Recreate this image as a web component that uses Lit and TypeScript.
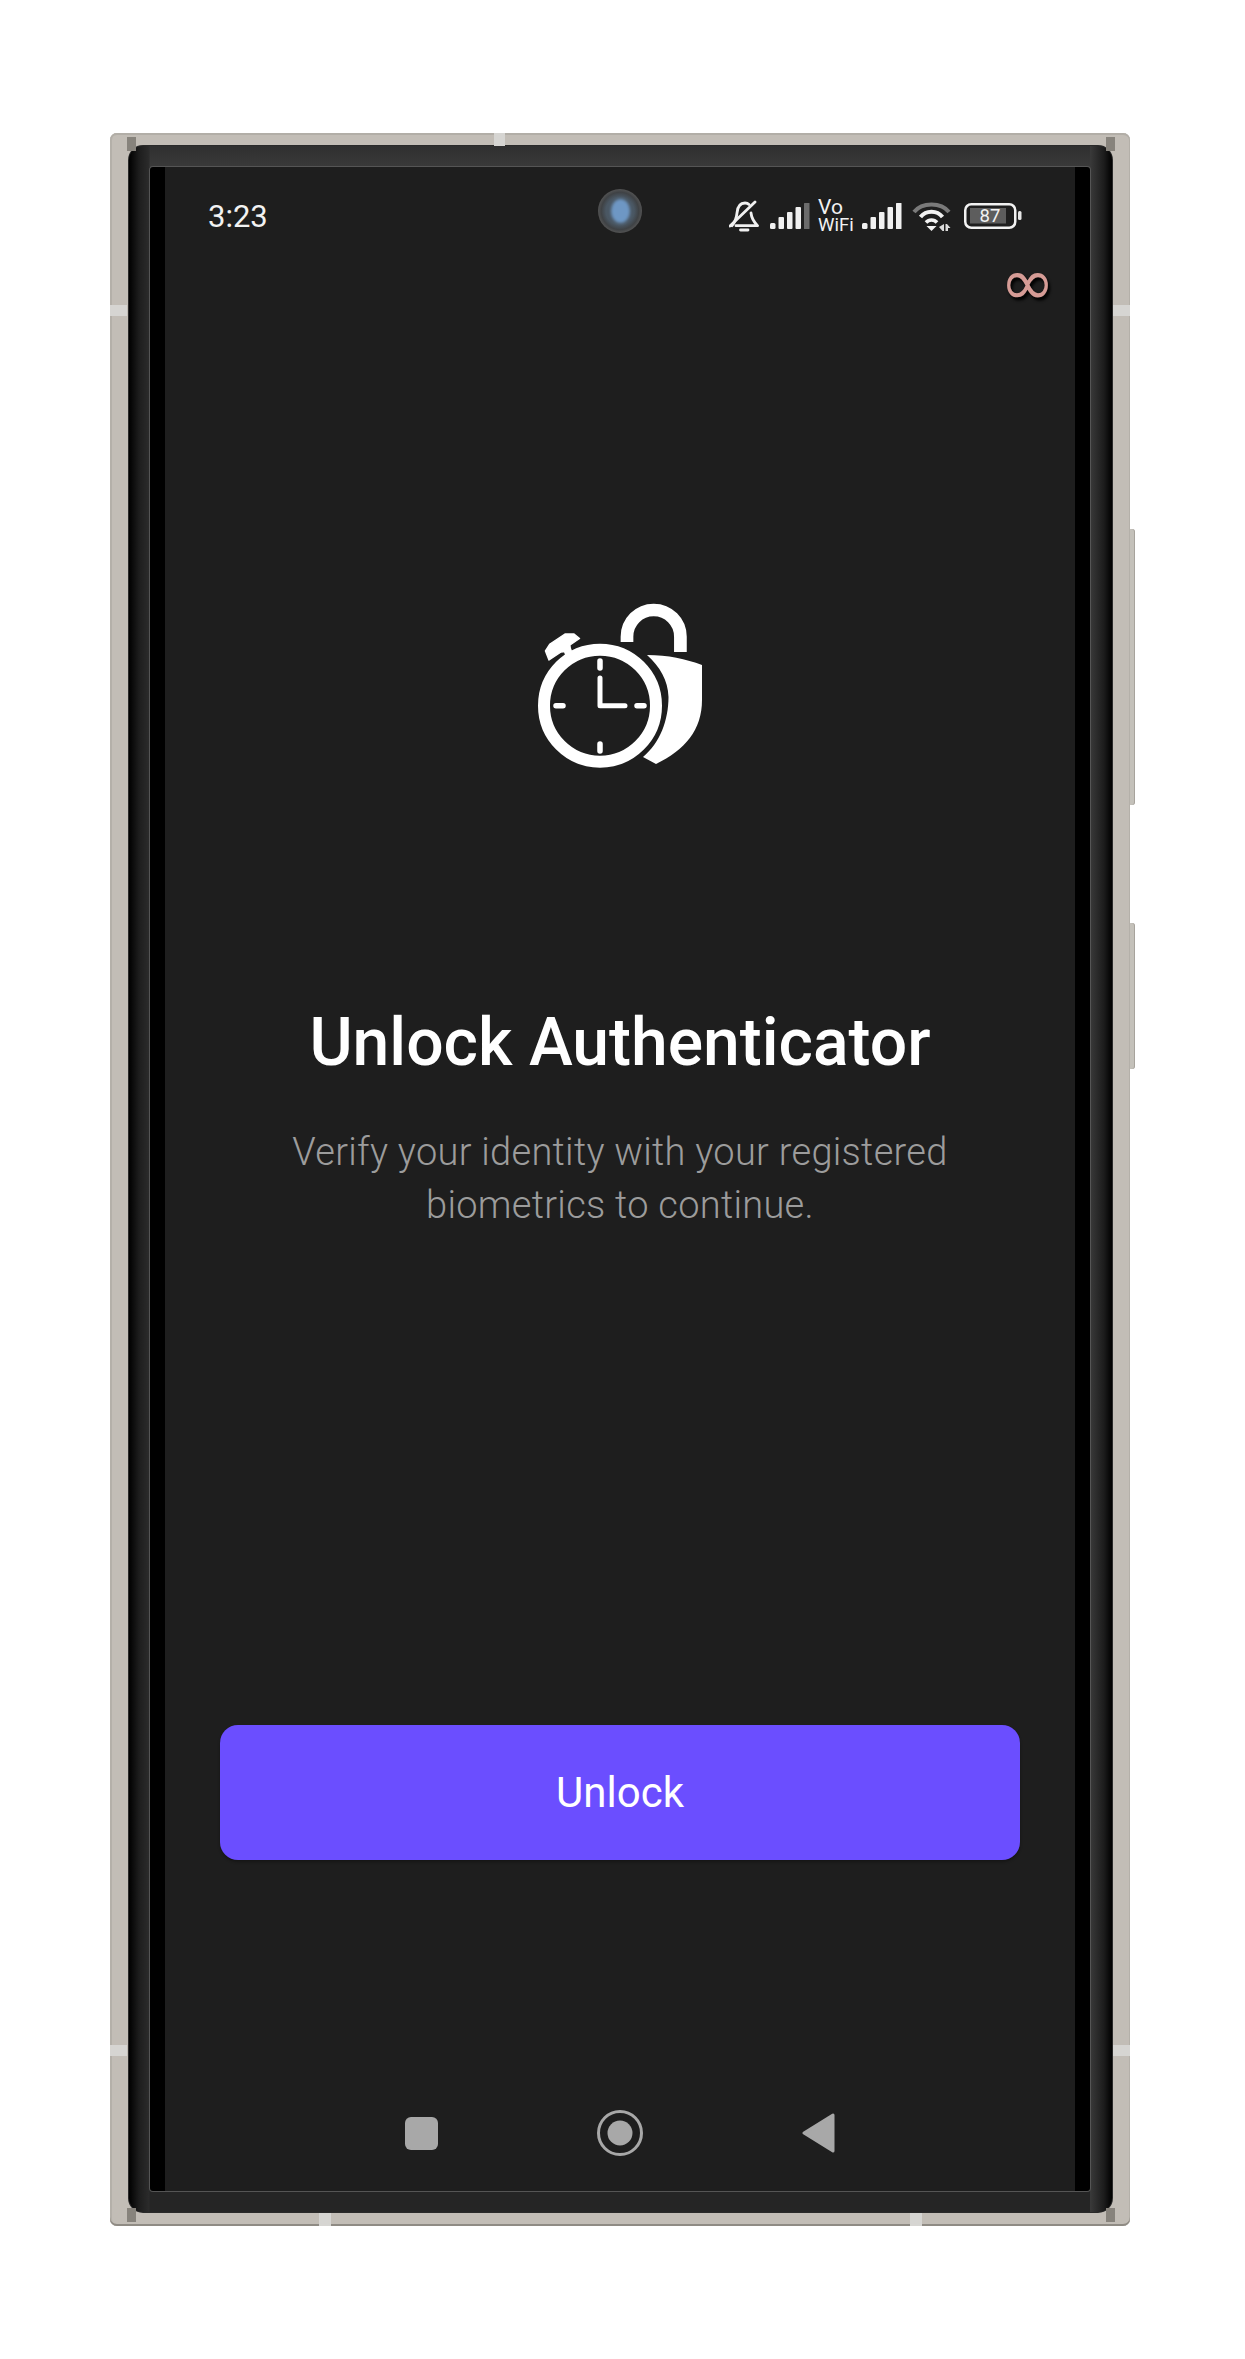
import { LitElement, html, css, svg } from "lit";
import { customElement } from "lit/decorators.js";

const signal = (last: string) => svg`
  <rect x="0" y="20" width="5.500" height="6" rx="1.500" fill="#f0f0f0"/>
  <rect x="8.500" y="14" width="5.500" height="12" rx="1" fill="#f0f0f0"/>
  <rect x="17" y="9" width="5.500" height="17" rx="1" fill="#f0f0f0"/>
  <rect x="25.500" y="4" width="5.500" height="22" rx="1" fill="#f0f0f0"/>
  <rect x="34" y="0" width="5.500" height="26" rx="0.500" fill="${last}"/>`;

@customElement("app-root")
export class AppRoot extends LitElement {
  static styles = css`
    :host { display: block; width: 1245px; height: 2359px; background: #fff; font-family: Roboto, "Liberation Sans", sans-serif; overflow: hidden; }
    .page { padding: 133px 115px 133px 110px; height: 2359px; box-sizing: border-box; }
    .frame { position: relative; width: 1020px; height: 2093px; box-sizing: border-box; padding: 13px 18px 14px 19px; background: #c2bdb6; border-radius: 7px; box-shadow: inset 0 -2px 0 #8f8b84, inset 0 2px 0 #b2aea7, inset 2px 0 0 #b4b0a9, inset -1px 0 0 #b4b0a9; }
    .corner { position: absolute; width: 9px; height: 14px; background: #87837c; }
    .c1 { left: 17px; top: 4px; } .c2 { right: 15px; top: 4px; } .c3 { left: 17px; bottom: 4px; } .c4 { right: 15px; bottom: 4px; }
    .band { position: absolute; background: #d6d5d2; }
    .bl1 { left: 0; top: 172px; width: 17px; height: 11px; }
    .br1 { right: 0; top: 172px; width: 17px; height: 11px; }
    .bl2 { left: 0; top: 1912px; width: 17px; height: 11px; }
    .br2 { right: 0; top: 1912px; width: 17px; height: 11px; }
    .bt1 { left: 384px; top: 0; width: 11px; height: 13px; }
    .bb1 { left: 209px; bottom: 0; width: 12px; height: 13px; }
    .bb2 { left: 800px; bottom: 0; width: 12px; height: 13px; }
    .key { position: absolute; right: -5px; width: 5px; background: #c4c1ba; border-radius: 0 3px 3px 0; box-shadow: inset -1px 0 0 #a7a39c; }
    .k1 { top: 396px; height: 276px; } .k2 { top: 790px; height: 146px; }
    .bezel { height: 100%; box-sizing: border-box; padding: 21px 22px 21px 21px; border-radius: 14px; background: #303030; background-image: linear-gradient(90deg, #000 0, #1d1d1d 10px, #2b2b2b 20px, transparent 21px, transparent calc(100% - 22px), #3a3a3a calc(100% - 22px), #1c1c1c calc(100% - 8px), #000 100%), linear-gradient(180deg, #2f2f2f 0, #3a3a3a 21px, #252525 21px, #252525 100%); box-shadow: 0 0 0 1px #2a2a2a; }
    .glass { height: 100%; box-sizing: border-box; padding: 0 15px; background: #000; border-radius: 3px; box-shadow: 0 0 0 1px #555; }
    .screen { position: relative; height: 100%; background: #1e1e1e; display: flex; flex-direction: column; align-items: center; }
    .status { align-self: stretch; height: 98px; box-sizing: border-box; padding: 0 53px 0 43px; display: flex; align-items: center; justify-content: space-between; color: #f2f2f2; }
    .time { font-size: 31px; font-weight: 400; line-height: 1; }
    .icons { display: flex; align-items: center; }
    .icons svg { display: block; }
    .g11 { margin-left: 11px; } .g8 { margin-left: 8px; } .g9 { margin-left: 9px; } .g10 { margin-left: 10px; } .g13 { margin-left: 13px; }
    .vowifi { font-size: 18.500px; line-height: 18px; font-weight: 400; color: #f2f2f2; width: 35px; }
    .vowifi span { display: block; }
    .vowifi .vo { font-size: 21px; }
    .camera { position: absolute; left: 433px; top: 22px; width: 44px; height: 44px; border-radius: 50%; background: radial-gradient(circle, #4a5763 0 45%, #3f4245 60%, #555 72%, #777 88%, #5a5a5a 100%); display: flex; align-items: center; justify-content: center; }
    .lens { width: 19px; height: 24px; border-radius: 50%; background: #6e97c4; filter: blur(1.500px); }
    .inf { align-self: flex-end; margin: -5px 20px 0 0; height: 46px; font-size: 66px; line-height: 46px; font-family: "DejaVu Sans", sans-serif; color: #d69c96; text-shadow: 2px 3px 3px #000; }
    .logo { display: block; margin-top: 274px; }
    h1 { margin: 224px 0 0; font-size: 66px; line-height: 78px; font-weight: 500; color: #fff; }
    p { margin: 44px 0 0; font-size: 38px; line-height: 53px; font-weight: 300; color: #9c9c9c; text-align: center; letter-spacing: 0.280px; }
    button { margin-top: 493px; width: 800px; height: 135px; border: 0; border-radius: 18px; background: #6b4eff; color: #fff; font: 400 42px Roboto, sans-serif; box-shadow: 0 2px 3px rgba(0,0,0,.3); padding: 0; }
    .nav { margin-top: 243px; width: 430px; height: 60px; display: flex; align-items: center; justify-content: space-between; }
    .square { width: 33px; height: 33px; border-radius: 6px; background: #a8a8a8; }
  `;

  render() {
    return html`<div class="page"><div class="frame">
      <div class="corner c1"></div><div class="corner c2"></div><div class="corner c3"></div><div class="corner c4"></div>
      <div class="band bl1"></div><div class="band br1"></div><div class="band bl2"></div><div class="band br2"></div>
      <div class="band bt1"></div><div class="band bb1"></div><div class="band bb2"></div>
      <div class="key k1"></div><div class="key k2"></div>
      <div class="bezel"><div class="glass"><div class="screen">
        <div class="status">
          <span class="time">3:23</span>
          <div class="icons">
            <svg width="30" height="32" viewBox="0 0 30 32" fill="none" stroke="#f0f0f0" stroke-width="2.800" stroke-linecap="round" stroke-linejoin="round">
              <path d="M3 25.700C6 22 7.500 18 8 13 8.500 7 11 3 16 3c1.500 0 3 .5 4 1.500"/>
              <path d="M22 13c.5 5 3 9 6.500 12.700H7"/>
              <path d="M1 26 26 2"/>
              <path d="M11.500 30h7.500"/>
            </svg>
            <svg class="g11" width="40" height="26" viewBox="0 0 40 26">${signal("#6b6b6b")}</svg>
            <div class="vowifi g8"><span class="vo">Vo</span><span>WiFi</span></div>
            <svg class="g9" width="40" height="26" viewBox="0 0 40 26">${signal("#f0f0f0")}</svg>
            <svg class="g10" width="39" height="31" viewBox="0 0 39 31" fill="none">
              <path d="M2 11C10 1 29 1 37 11" stroke="#7a7a7a" stroke-width="4"/>
              <path d="M8.500 16C14 9 25 9 30.500 16" stroke="#f2f2f2" stroke-width="4"/>
              <path d="M14 21.500C17 18 22 18 25 21.500" stroke="#f2f2f2" stroke-width="3.500"/>
              <path d="M14.500 25h10l-5 5z" fill="#f2f2f2"/>
              <path d="M32 23v7h-1.500l-3.500-4zM33.500 30v-7h1.500l3.500 4H36v3z" fill="#dcdcdc"/>
            </svg>
            <svg class="g13" width="58" height="26" viewBox="0 0 58 26">
              <rect x="1.250" y="1.250" width="50" height="23.500" rx="6" fill="none" stroke="#f2f2f2" stroke-width="2.500"/>
              <rect x="6" y="5" width="36" height="15.500" fill="#5d5d5d"/>
              <rect x="54" y="8" width="3.500" height="9" rx="1.500" fill="#e6e6e6"/>
              <text x="26" y="19" text-anchor="middle" font-family="Roboto, sans-serif" font-size="18.500" fill="#f2f2f2">87</text>
            </svg>
          </div>
        </div>
        <div class="camera"><div class="lens"></div></div>
        <div class="inf">∞</div>
        <svg class="logo" width="220" height="200" viewBox="0 0 220 200" fill="none">
          <path d="M117 62V56.700a26.700 26.700 0 0 1 53.400 0V72" stroke="#fff" stroke-width="12.700"/>
          <path d="M137 75C158 75 176 79 192 85V120C192 150 175 170 146 184L133 177C150 163 158.500 140 158.500 117 158 100 150 87 137 75Z" fill="#fff"/>
          <circle cx="90" cy="125.700" r="56" stroke="#fff" stroke-width="12"/>
          <path d="M35.500 71 40 64 55 54H64L69.500 58.500 60 65 59.500 71 51 72 39 80Z" fill="#fff" stroke="#fff" stroke-width="1.500" stroke-linejoin="round"/>
          <path d="M56 66 60 77" stroke="#fff" stroke-width="8"/>
          <path d="M90 81v7M90 164v7M46 125.700h7M127 125.700h7" stroke="#fff" stroke-width="5.500" stroke-linecap="round"/>
          <path d="M90 98v27.700h25" stroke="#fff" stroke-width="5" stroke-linecap="round" stroke-linejoin="round"/>
        </svg>
        <h1>Unlock Authenticator</h1>
        <p>Verify your identity with your registered<br>biometrics to continue.</p>
        <button>Unlock</button>
        <div class="nav">
          <div class="square"></div>
          <svg width="46" height="46" viewBox="0 0 46 46"><circle cx="23" cy="23" r="21.500" fill="none" stroke="#a8a8a8" stroke-width="3"/><circle cx="23" cy="23" r="12.500" fill="#a8a8a8"/></svg>
          <svg width="33" height="40" viewBox="0 0 33 40"><path d="M2 20 31 2v36z" fill="#a8a8a8" stroke="#a8a8a8" stroke-width="3" stroke-linejoin="round"/></svg>
        </div>
      </div></div></div>
    </div></div>`;
  }
}
